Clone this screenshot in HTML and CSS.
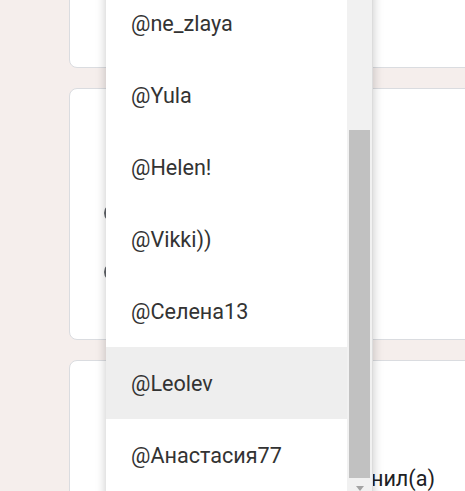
FILE: index.html
```html
<!DOCTYPE html>
<html lang="ru">
<head>
<meta charset="utf-8">
<title>Упоминание</title>
<link rel="stylesheet" href="styles.css">
</head>
<body>
<main class="page">
  <section class="card card-first"></section>
  <section class="card card-options">
    <div class="option"><span class="radio"></span><span class="option-label">Да</span></div>
    <div class="option"><span class="radio"></span><span class="option-label">Нет</span></div>
  </section>
  <section class="card card-last">
    <p class="note">Комментарий оценил(а)</p>
  </section>
</main>

<div class="dropdown" role="listbox">
  <ul class="list">
    <li class="item">@ne_zlaya</li>
    <li class="item">@Yula</li>
    <li class="item">@Helen!</li>
    <li class="item">@Vikki))</li>
    <li class="item">@Селена13</li>
    <li class="item is-active">@Leolev</li>
    <li class="item">@Анастасия77</li>
  </ul>
  <div class="scrollbar">
    <div class="thumb"></div>
    <div class="arrow-btn"><span class="arrow"></span></div>
  </div>
</div>
</body>
</html>
```
FILE: styles.css
```css
* { box-sizing: border-box; }

html, body {
  margin: 0;
  padding: 0;
  height: 100%;
  overflow: hidden;
}

body {
  background: #f5eeec;
  font-family: Roboto, "Noto Sans", "Liberation Sans", sans-serif;
  color: #202124;
}

.page {
  display: flex;
  flex-direction: column;
  gap: 20px;
  padding-left: 69px;
  margin-top: -32px;
}

.card {
  width: 640px;
  background: #fff;
  border: 1px solid #dadce0;
  border-radius: 8px;
}

.card-first { height: 100px; }

.card-options {
  height: 252px;
  padding: 114px 0 0 34px;
  display: flex;
  flex-direction: column;
  gap: 39px;
}

.option {
  display: flex;
  align-items: center;
  gap: 16px;
  height: 20px;
}

.radio {
  width: 20px;
  height: 20px;
  border: 2px solid #5f6368;
  border-radius: 50%;
  flex: none;
}

.option-label { font-size: 16px; }

.card-last {
  height: 200px;
  padding: 104px 273px 0 0;
  display: flex;
  justify-content: flex-end;
  align-items: flex-start;
}

.note {
  margin: 0;
  font-size: 21.6px;
  line-height: 28px;
  white-space: nowrap;
  color: #202124;
}

.dropdown {
  position: absolute;
  left: 106px;
  top: -13px;
  width: 267px;
  height: 520px;
  display: flex;
  background: #fff;
  box-shadow: 0 2px 10px rgba(0, 0, 0, 0.22);
}

.list {
  list-style: none;
  margin: 0;
  padding: 0;
  flex: 1;
}

.item {
  height: 72px;
  display: flex;
  align-items: center;
  padding-left: 25px;
  font-size: 21.6px;
  color: #333;
}

.item.is-active { background: #eeeeee; }

.scrollbar {
  width: 26px;
  background: #f1f1f1;
  border-right: 1px solid #dcdcdc;
  display: flex;
  flex-direction: column;
  align-items: center;
}

.thumb {
  margin-top: 143px;
  width: 21px;
  height: 348px;
  background: #c1c1c1;
}

.arrow-btn {
  height: 20px;
  padding-top: 8px;
  display: flex;
  justify-content: center;
}

.arrow {
  width: 0;
  height: 0;
  border-left: 4px solid transparent;
  border-right: 4px solid transparent;
  border-top: 5px solid #a3a3a3;
}
```
